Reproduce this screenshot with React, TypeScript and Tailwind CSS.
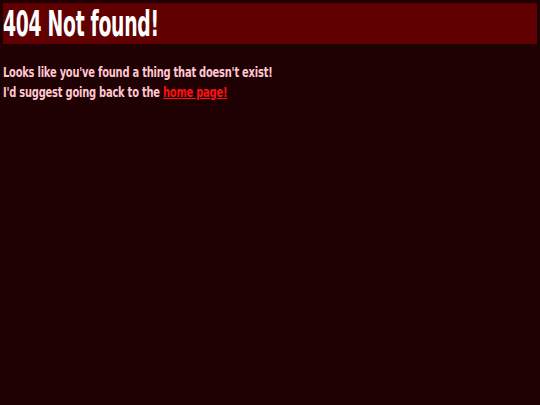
export default function App() {
  return (
    <div
      className="min-h-[405px] bg-[#1f0003] p-[3px]"
      style={{ fontFamily: '"DejaVu Sans Condensed", "DejaVu Sans", sans-serif' }}
    >
      <h1 className="flex h-[41px] items-center bg-[#600000] text-[36px] font-bold leading-none text-white">
        <span className="inline-block origin-left scale-x-[0.58] whitespace-nowrap tracking-[-0.5px]">
          404 Not found!
        </span>
      </h1>
      <div className="mt-[18px] text-[14.5px] font-bold leading-[20px] text-[#ffc7d0]">
        <p className="origin-left scale-x-[0.76] whitespace-nowrap tracking-[-0.3px]">
          Looks like you've found a thing that doesn't exist!
        </p>
        <p className="origin-left scale-x-[0.76] whitespace-nowrap tracking-[-0.3px]">
          I'd suggest going back to the{' '}
          <a href="#" className="text-[#ff1010] underline">
            home page!
          </a>
        </p>
      </div>
    </div>
  );
}
